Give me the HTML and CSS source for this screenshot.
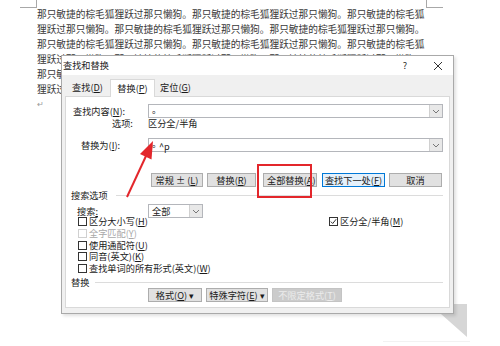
FILE: index.html
```html
<!DOCTYPE html>
<html>
<head>
<meta charset="UTF-8">
<meta name="viewport" content="width=device-width, initial-scale=1.0">
<title>查找和替换</title>
<link rel="stylesheet" href="styles.css">
</head>
<body>

<div class="page">
  <div class="mark mark-left"></div>
  <div class="mark mark-right"></div>

  <p class="doc">那只敏捷的棕毛狐狸跃过那只懒狗。那只敏捷的棕毛狐狸跃过那只懒狗。那只敏捷的棕毛狐狸跃过那只懒狗。那只敏捷的棕毛狐狸跃过那只懒狗。那只敏捷的棕毛狐狸跃过那只懒狗。那只敏捷的棕毛狐狸跃过那只懒狗。那只敏捷的棕毛狐狸跃过那只懒狗。那只敏捷的棕毛狐狸跃过那只懒狗。那只敏捷的棕毛狐狸跃过那只懒狗。那只敏捷的棕毛狐狸跃过那只懒狗。那只敏捷的棕毛狐狸跃过那只懒狗。那只敏捷的棕毛狐狸跃过那只懒狗。那只敏捷的棕毛狐狸跃过那只懒狗。那只敏捷的棕毛狐狸跃过那只懒狗。那只敏捷的棕毛狐狸跃过那只懒狗。</p>
  <div class="para-mark">↵</div>

  <!-- shadow corner under the dialog -->
  <svg class="corner" width="500" height="346" viewBox="0 0 500 346">
    <polygon points="454,304 467,304 467,337 441,314 454,314" fill="#d6d6d6"/>
    <line x1="383" y1="341.5" x2="470" y2="341.5" stroke="#f2f2f2" stroke-width="1"/>
  </svg>

  <!-- DIALOG -->
  <div class="dialog">
    <div class="titlebar">
      <span class="title">查找和替换</span>
      <span class="help">?</span>
      <span class="close">
        <svg width="10" height="10" viewBox="0 0 10 10"><path d="M1 1L9 9M9 1L1 9" stroke="#333" stroke-width="1"/></svg>
      </span>
    </div>

    <div class="dlg-body">
      <div class="tabs">
        <div class="tab tab-find">查找(<u>D</u>)</div>
        <div class="tab tab-rep active">替换(<u>P</u>)</div>
        <div class="tab tab-goto">定位(<u>G</u>)</div>
      </div>

      <div class="panel">
        <div class="row row-find">
          <span class="lbl lbl-find">查找内容(<u>N</u>):</span>
          <div class="combo">
            <span class="val"><span class="stop">。</span></span>
            <span class="drop"><svg width="8" height="5" viewBox="0 0 8 5"><polyline points="1,1 4,4 7,1" fill="none" stroke="#777" stroke-width="1"/></svg></span>
          </div>
        </div>
        <div class="row row-opt">
          <span class="lbl lbl-opt">选项:</span>
          <span>区分全/半角</span>
        </div>
        <div class="row row-rep">
          <span class="lbl lbl-rep">替换为(<u>I</u>):</span>
          <div class="combo">
            <span class="val"><span class="stop">。</span>^p</span>
            <span class="drop"><svg width="8" height="5" viewBox="0 0 8 5"><polyline points="1,1 4,4 7,1" fill="none" stroke="#777" stroke-width="1"/></svg></span>
          </div>
        </div>

        <div class="actions">
          <button class="btn b-less">常规 ± (<u>L</u>)</button>
          <button class="btn b-rep">替换(<u>R</u>)</button>
          <button class="btn b-all">全部替换(<u>A</u>)</button>
          <button class="btn b-next">查找下一处(<u>F</u>)</button>
          <button class="btn b-cancel">取消</button>
        </div>

        <div class="sect sect-search">
          <span>搜索选项</span>
          <span class="rule"></span>
        </div>

        <div class="row row-scope">
          <span class="lbl lbl-scope">搜索<u>:</u></span>
          <div class="select">
            <span class="val">全部</span>
            <span class="drop"><svg width="8" height="5" viewBox="0 0 8 5"><polyline points="1,1 4,4 7,1" fill="none" stroke="#777" stroke-width="1"/></svg></span>
          </div>
        </div>

        <div class="checks">
          <div class="check-list">
            <div class="chk"><span class="box"></span>区分大小写(<u>H</u>)</div>
            <div class="chk disabled"><span class="box"></span>全字匹配(<u>Y</u>)</div>
            <div class="chk"><span class="box"></span>使用通配符(<u>U</u>)</div>
            <div class="chk"><span class="box"></span>同音(英文)(<u>K</u>)</div>
            <div class="chk"><span class="box"></span>查找单词的所有形式(英文)(<u>W</u>)</div>
          </div>
          <div class="check-side">
            <div class="chk"><span class="box checked"><svg width="7" height="7" viewBox="0 0 7 7"><polyline points="0.8,3.6 2.7,5.5 6.2,1.2" fill="none" stroke="#333" stroke-width="1"/></svg></span>区分全/半角(<u>M</u>)</div>
          </div>
        </div>

        <div class="sect sect-rep">
          <span>替换</span>
          <span class="rule"></span>
        </div>

        <div class="actions bottom">
          <button class="btn b-fmt">格式(<u>O</u>) ▾</button>
          <button class="btn b-spec">特殊字符(<u>E</u>) ▾</button>
          <button class="btn b-nofmt" disabled>不限定格式(<u>T</u>)</button>
        </div>
      </div>
    </div>
  </div>

  <!-- annotation -->
  <div class="redbox"></div>
  <svg class="arrow" width="500" height="346" viewBox="0 0 500 346">
    <line x1="127" y1="197" x2="146" y2="156" stroke="#e3262b" stroke-width="2"/>
    <polygon points="153,141 151.5,159.5 140,154" fill="#e3262b"/>
  </svg>
</div>

</body>
</html>
```

FILE: styles.css
```css
body{
    margin:0;
    background:#fff;
    font-family:"Noto Sans CJK SC", sans-serif;
}

.page{
    position:relative;
    width:500px;
    height:346px;
    overflow:hidden;
    padding:7px 0 0 37px;
    box-sizing:border-box;
}

/* page corner marks */
.mark{
    position:absolute;
    top:-1px;
    width:16px;
    height:8px;
    border-bottom:1px solid #a8a8a8;
}
.mark-left{left:20px;border-right:1px solid #a8a8a8;}
.mark-right{left:426px;border-left:1px solid #a8a8a8;}

.doc{
    margin:0;
    width:390px;
    font-size:9.7px;
    line-height:15px;
    color:#3a3a3a;
}

.para-mark{
    font-size:8px;
    line-height:14px;
    color:#999;
}

.corner{
    position:absolute;
    left:0;
    top:0;
}

/* DIALOG */
.dialog{
    position:absolute;
    left:61px;
    top:55px;
    width:393px;
    height:259px;
    box-sizing:border-box;
    border:1px solid #a9a9a9;
    background:#f0f0f0;
    box-shadow:2px 2px 3px rgba(0,0,0,0.12);
    display:flex;
    flex-direction:column;
    font-size:9.2px;
    line-height:11px;
    color:#1a1a1a;
}

.titlebar{
    height:19px;
    background:#fff;
    display:flex;
    align-items:center;
    padding:0 5px 0 1px;
}
.title{flex:1;}
.help{
    width:14px;
    text-align:center;
    margin-right:16px;
    color:#333;
}
.close{
    width:20px;
    display:flex;
    justify-content:center;
}

.dlg-body{
    flex:1;
    display:flex;
    flex-direction:column;
    padding:0 3px 5px;
}

.tabs{
    height:21px;
    display:flex;
    align-items:flex-end;
}
.tab{
    height:17px;
    line-height:16px;
    text-align:center;
    box-sizing:border-box;
}
.tab-find{width:45px;}
.tab-rep{width:45px;}
.tab-goto{width:41px;}
.tab.active{
    height:18px;
    background:#fff;
    border:1px solid #d9d9d9;
    border-bottom:none;
    margin-bottom:-1px;
    position:relative;
    z-index:1;
}

.panel{
    flex:1;
    background:#fff;
    border:1px solid #d9d9d9;
}

.row{
    display:flex;
    align-items:center;
}
.lbl{
    width:82px;
    flex:none;
    box-sizing:border-box;
}
.lbl-find{padding-left:7px;}
.lbl-opt{padding-left:46px;}
.lbl-rep{padding-left:15px;}
.lbl-scope{padding-left:11px;}

.row-find{margin-top:7px;height:14px;}
.row-opt{height:11px;}
.row-rep{margin-top:9px;height:14px;}
.row-scope{margin-top:3px;height:14px;}

.combo, .select{
    height:14px;
    box-sizing:border-box;
    border:1px solid #b4b6bb;
    display:flex;
    align-items:center;
}
.combo{width:295px;}
.select{width:55px;}
.val{padding-left:3px;}
.stop{
    display:inline-block;
    width:7px;
    vertical-align:3px;
}
.drop{
    margin-left:auto;
    width:12px;
    height:12px;
    background:#e8e8e8;
    border-left:1px solid #d0d0d0;
    display:flex;
    align-items:center;
    justify-content:center;
}

/* buttons */
.actions{
    display:flex;
    margin-top:21px;
    padding-left:85px;
    height:14px;
}
.btn{
    height:14px;
    padding:0;
    box-sizing:border-box;
    border:1px solid #adadad;
    background:#e1e1e1;
    font-family:inherit;
    font-size:9.2px;
    line-height:12px;
    color:#1a1a1a;
    white-space:nowrap;
    overflow:hidden;
}
.b-less{width:52px;}
.b-rep{width:49px;margin-left:4px;}
.b-all{width:54px;margin-left:7px;text-align:left;padding-left:3px;}
.b-next{width:63px;margin-left:5px;border-color:#0078d7;background:#e5f1fb;}
.b-cancel{width:53px;margin-left:4px;}

.actions.bottom{
    margin-top:0;
    padding-left:82px;
}
.b-fmt{width:54px;}
.b-spec{width:62px;margin-left:4px;}
.b-nofmt{
    width:70px;
    margin-left:4px;
    background:#cbcbcb;
    border-color:#c4c4c4;
    color:#ececec;
}

/* section headers */
.sect{
    display:flex;
    align-items:center;
    height:11px;
    padding-left:5px;
}
.sect-search{margin-top:3px;}
.sect-rep{margin-top:2.5px;}
.rule{
    flex:1;
    border-top:1px solid #dcdcdc;
    margin:0 6px 0 8px;
}
.sect-rep .rule{margin-left:6px;}

/* checkboxes */
.checks{
    display:flex;
    margin-top:-2px;
}
.check-list{
    width:262px;
    padding-left:11px;
    box-sizing:border-box;
}
.chk{
    height:11.7px;
    display:flex;
    align-items:center;
    white-space:nowrap;
}
.box{
    width:9px;
    height:9px;
    box-sizing:border-box;
    border:1px solid #333;
    margin:0 2px 0 1px;
    display:flex;
    align-items:center;
    justify-content:center;
    flex:none;
}
.chk.disabled{color:#a8a8a8;}
.chk.disabled .box{border-color:#d0d0d0;}

/* annotation */
.redbox{
    position:absolute;
    left:257px;
    top:164px;
    width:55px;
    height:34px;
    box-sizing:border-box;
    border:2px solid #e3262b;
}
.arrow{
    position:absolute;
    left:0;
    top:0;
}
```
